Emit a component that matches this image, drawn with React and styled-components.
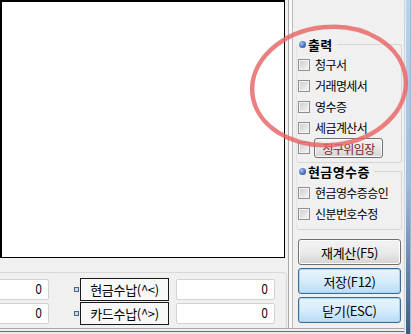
import React from 'react';
import styled, { createGlobalStyle } from 'styled-components';

const GlobalStyle = createGlobalStyle`
  body {
    margin: 0;
    background: #f0f0f0;
    overflow: hidden;
  }
  * { box-sizing: border-box; }
`;

const KR = `"Noto Sans CJK KR", "Noto Sans", sans-serif`;

const Window = styled.div`
  position: relative;
  width: 411px;
  height: 334px;
  display: flex;
  background: #f0f0f0;
  font-family: ${KR};
  color: #000;
  overflow: hidden;
`;

const Content = styled.div`
  width: 404px;
  display: flex;
  flex-direction: column;
`;

const Body = styled.div`
  height: 328px;
  display: flex;
`;

const LeftCol = styled.div`
  width: 287px;
  display: flex;
  flex-direction: column;
`;

const MainBox = styled.div`
  width: 285px;
  height: 258px;
  background: #fff;
  border: 1px solid #000;
  border-left-width: 2px;
  border-top-width: 2px;
`;

const BottomGroup = styled.div`
  flex: 1;
  margin-top: 14px;
  border-top: 1px solid #d8d8d8;
  border-right: 1px solid #d8d8d8;
  border-top-right-radius: 4px;
  padding-top: 5px;
  display: flex;
  flex-direction: column;
  gap: 2px;
`;

const FieldRow = styled.div`
  height: 22px;
  display: flex;
  align-items: center;
`;

const AmountBox = styled.div`
  width: ${p => p.$w}px;
  height: 21px;
  margin-left: ${p => p.$ml || 0}px;
  background: #fff;
  border: 1px solid #d2d2d2;
  border-radius: 2px;
  ${p => p.$cut && 'border-left: none; border-radius: 0 2px 2px 0;'}
  display: flex;
  align-items: center;
  justify-content: flex-end;
  padding-right: 6px;
`;

const Amount = styled.span`
  font-family: "Liberation Sans", sans-serif;
  font-size: 14px;
  display: inline-block;
  transform: scaleX(0.8);
  transform-origin: right center;
`;

const Marker = styled.span`
  width: 5px;
  height: 5px;
  margin-left: 25px;
  border: 1px solid #4d6584;
  background: #c9dcef;
`;

const LabelBox = styled.div`
  width: 89px;
  height: 23px;
  margin-left: 1px;
  border: 1px solid #1a1a1a;
  background: #f8f8f8;
  display: flex;
  align-items: center;
  justify-content: center;
  font-size: 13px;
  letter-spacing: -0.3px;
`;

const Splitter = styled.div`
  width: 7px;
  display: flex;
  justify-content: center;
  &::before {
    content: '';
    width: 3px;
    border-left: 1px solid #a9a9a9;
    border-right: 1px solid #b9b9b9;
    background: #fafafa;
  }
`;

const SidePanel = styled.div`
  width: 110px;
  padding: 36px 2px 0 2px;
  display: flex;
  flex-direction: column;
`;

const Group = styled.fieldset`
  margin: 0;
  padding: 0 0 ${p => p.$pb}px 0;
  border: 1px solid #d6d6d6;
  border-left-color: #e4e4e4;
  border-radius: 3px;
  min-width: 0;
`;

const Legend = styled.legend`
  margin-left: 0;
  padding: 0 4px 0 2px;
  display: flex;
  align-items: center;
  gap: 2px;
  height: 16px;
  font-size: 13px;
  font-weight: 700;
  letter-spacing: 0.4px;
`;

const Dot = styled.span`
  width: 7px;
  height: 7px;
  border-radius: 50%;
  background: radial-gradient(circle at 35% 35%, #a9c4ee 0, #4b72c2 55%, #1f3f86 100%);
`;

const Spacer = styled.div`
  height: ${p => p.$h}px;
`;

const CheckRow = styled.div`
  height: ${p => p.$h || 21}px;
  display: flex;
  align-items: center;
  padding-left: 1px;
  gap: 5px;
  font-size: 12px;
  letter-spacing: -0.6px;
`;

const Check = styled.span`
  flex: none;
  width: 12px;
  height: 12px;
  border: 1px solid #8e8f8f;
  background: linear-gradient(135deg, #cbcbcb, #f7f7f7);
  box-shadow: inset 0 0 0 1px #f4f4f4;
`;

const SmallButton = styled.div`
  width: 69px;
  height: 20px;
  margin-left: -1px;
  border: 1px solid #707070;
  border-radius: 3px;
  background: linear-gradient(#f4f4f4, #e6e6e6 50%, #d5d5d5);
  box-shadow: inset 0 0 0 1px #fbfbfb;
  display: flex;
  align-items: center;
  justify-content: center;
  color: #7e2222;
  font-size: 12px;
  letter-spacing: -0.6px;
`;

const Buttons = styled.div`
  margin-top: 9px;
  display: flex;
  flex-direction: column;
  gap: 3px;
  padding-left: 2px;
`;

const ActionButton = styled.div`
  width: 103px;
  height: 26px;
  border-radius: 3px;
  display: flex;
  align-items: center;
  justify-content: center;
  font-size: 13px;
  letter-spacing: -0.3px;
  border: 1px solid ${p => (p.$primary ? '#3c6c95' : '#707070')};
  background: ${p =>
    p.$primary
      ? 'linear-gradient(#e9f5fd, #d6ecfb 50%, #b8ddf6)'
      : 'linear-gradient(#f2f2f2, #ebebeb 50%, #d4d4d4)'};
  box-shadow: inset 0 0 0 1px ${p => (p.$primary ? '#a9d3f0' : '#fcfcfc')};
`;

const BottomEdge = styled.div`
  height: 6px;
  border-top: 1px solid #a8a8a8;
  background: linear-gradient(#f0f0f0 0 2px, #6e6e6e 2px 3px, #e8e8e8 3px);
`;

const Frame = styled.div`
  width: 7px;
  border-left: 1px solid #c7d4e2;
  background: linear-gradient(90deg, #e6eef7 0 1px, transparent 1px 5px, #9db6d1 5px),
    linear-gradient(#bcd2ea, #9fbbdc 55%, #3e5c82);
`;

const Overlay = styled.svg`
  position: absolute;
  left: 0;
  top: 0;
  pointer-events: none;
`;

const outputs = ['청구서', '거래명세서', '영수증', '세금계산서'];
const receipts = ['현금영수증승인', '신분번호수정'];
const payments = ['현금수납(^<)', '카드수납(^>)'];

const App = () => {
  return (
    <Window>
      <GlobalStyle />
      <Content>
        <Body>
          <LeftCol>
            <MainBox />
            <BottomGroup>
              {payments.map(label => (
                <FieldRow key={label}>
                  <AmountBox $w={49} $cut><Amount>0</Amount></AmountBox>
                  <Marker />
                  <LabelBox>{label}</LabelBox>
                  <AmountBox $w={99} $ml={7}><Amount>0</Amount></AmountBox>
                </FieldRow>
              ))}
            </BottomGroup>
          </LeftCol>
          <Splitter />
          <SidePanel>
            <Group $pb={4}>
              <Legend><Dot />출력</Legend>
              <Spacer $h={2} />
              {outputs.map(t => (
                <CheckRow key={t}>
                  <Check />
                  {t}
                </CheckRow>
              ))}
              <CheckRow $h={20}>
                <Check />
                <SmallButton>청구위임장</SmallButton>
              </CheckRow>
            </Group>
            <Group $pb={5}>
              <Legend><Dot />현금영수증</Legend>
              <Spacer $h={3} />
              {receipts.map(t => (
                <CheckRow key={t}>
                  <Check />
                  {t}
                </CheckRow>
              ))}
            </Group>
            <Buttons>
              <ActionButton>재계산(F5)</ActionButton>
              <ActionButton $primary>저장(F12)</ActionButton>
              <ActionButton $primary>닫기(ESC)</ActionButton>
            </Buttons>
          </SidePanel>
        </Body>
        <BottomEdge />
      </Content>
      <Frame />
      <Overlay width="411" height="334">
        <ellipse
          cx="329"
          cy="86"
          rx="77"
          ry="59"
          transform="rotate(-6 329 86)"
          fill="none"
          stroke="rgba(232,100,100,0.82)"
          strokeWidth="4.5"
        />
      </Overlay>
    </Window>
  );
};

export default App;
